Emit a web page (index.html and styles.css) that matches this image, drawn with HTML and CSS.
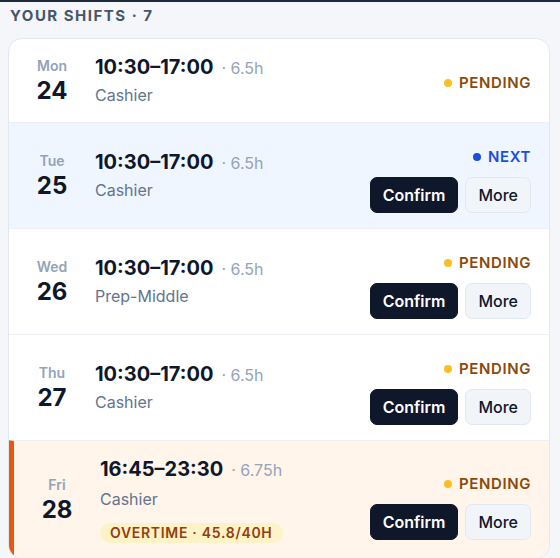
FILE: index.html
```html
<!DOCTYPE html>
<html lang="en">
  <head>
    <meta charset="UTF-8" />
    <meta name="viewport" content="width=device-width, initial-scale=1.0" />
    <title>Your Shifts</title>
    <link rel="stylesheet" href="styles.css">
  </head>
  <body>
    <div class="topline"></div>
    <main class="page">
      <h2 class="section-title">YOUR SHIFTS · 7</h2>

      <ul class="shift-list">
        <li class="shift">
          <div class="day"><span class="dow">Mon</span><span class="date">24</span></div>
          <div class="info">
            <div class="hours"><span class="time">10:30–17:00</span><span class="dur">· 6.5h</span></div>
            <div class="role">Cashier</div>
          </div>
          <div class="side solo">
            <span class="status pending">PENDING</span>
          </div>
        </li>

        <li class="shift next">
          <div class="day"><span class="dow">Tue</span><span class="date">25</span></div>
          <div class="info">
            <div class="hours"><span class="time">10:30–17:00</span><span class="dur">· 6.5h</span></div>
            <div class="role">Cashier</div>
          </div>
          <div class="side">
            <span class="status upcoming">NEXT</span>
            <div class="actions">
              <button class="btn btn-dark">Confirm</button>
              <button class="btn btn-light">More</button>
            </div>
          </div>
        </li>

        <li class="shift">
          <div class="day"><span class="dow">Wed</span><span class="date">26</span></div>
          <div class="info">
            <div class="hours"><span class="time">10:30–17:00</span><span class="dur">· 6.5h</span></div>
            <div class="role">Prep-Middle</div>
          </div>
          <div class="side">
            <span class="status pending">PENDING</span>
            <div class="actions">
              <button class="btn btn-dark">Confirm</button>
              <button class="btn btn-light">More</button>
            </div>
          </div>
        </li>

        <li class="shift">
          <div class="day"><span class="dow">Thu</span><span class="date">27</span></div>
          <div class="info">
            <div class="hours"><span class="time">10:30–17:00</span><span class="dur">· 6.5h</span></div>
            <div class="role">Cashier</div>
          </div>
          <div class="side">
            <span class="status pending">PENDING</span>
            <div class="actions">
              <button class="btn btn-dark">Confirm</button>
              <button class="btn btn-light">More</button>
            </div>
          </div>
        </li>

        <li class="shift overtime">
          <div class="day"><span class="dow">Fri</span><span class="date">28</span></div>
          <div class="info">
            <div class="hours"><span class="time">16:45–23:30</span><span class="dur">· 6.75h</span></div>
            <div class="role">Cashier</div>
            <span class="ot-badge">OVERTIME · 45.8/40H</span>
          </div>
          <div class="side">
            <span class="status pending">PENDING</span>
            <div class="actions">
              <button class="btn btn-dark">Confirm</button>
              <button class="btn btn-light">More</button>
            </div>
          </div>
        </li>
      </ul>
    </main>
  </body>
</html>
```

FILE: styles.css
```css
body {
  margin: 0;
  background: #f4f6fa;
  font-family: Inter, "Noto Sans", sans-serif;
  color: #0f172a;
}
.topline {
  height: 2px;
  background: #1e293b;
}
.page {
  padding: 0 10px 0 8px;
}
.section-title {
  margin: 4px 0 12px 2px;
  font-size: 15px;
  line-height: 20px;
  font-weight: 700;
  letter-spacing: 0.1em;
  color: #475569;
}
.shift-list {
  list-style: none;
  margin: 0;
  padding: 0;
  background: #fff;
  border: 1px solid #e2e8f0;
  border-radius: 14px;
  overflow: hidden;
}
.shift {
  display: flex;
  align-items: center;
  padding: 15px 18px 15px 20px;
  border-top: 1px solid #edf1f6;
}
.shift:first-child {
  border-top: none;
}
.shift.next {
  background: #eff6ff;
}
.shift.overtime {
  background: #fff5eb;
  border-left: 6px solid #ea580c;
  margin-left: -1px;
}
.day {
  width: 46px;
  display: flex;
  flex-direction: column;
  align-items: center;
}
.dow {
  font-size: 14px;
  line-height: 18px;
  font-weight: 600;
  color: #94a3b8;
  margin-bottom: 2px;
}
.date {
  font-size: 24px;
  line-height: 28px;
  font-weight: 700;
}
.info {
  flex: 1;
  margin-left: 20px;
}
.hours {
  display: flex;
  align-items: baseline;
  height: 26px;
  line-height: 26px;
}
.time {
  font-size: 20px;
  font-weight: 700;
}
.dur {
  margin-left: 8px;
  font-size: 16px;
  color: #94a3b8;
}
.role {
  margin-top: 3px;
  font-size: 16px;
  line-height: 24px;
  color: #64748b;
}
.overtime .role {
  margin-top: 5px;
}
.ot-badge {
  display: inline-block;
  margin-top: 12px;
  padding: 0 10px;
  height: 20px;
  line-height: 20px;
  border-radius: 10px;
  background: #fef3c7;
  color: #92400e;
  font-size: 14px;
  font-weight: 600;
  letter-spacing: 0.05em;
}
.side {
  display: flex;
  flex-direction: column;
  align-items: flex-end;
  padding-top: 9px;
}
.side.solo {
  padding-top: 5px;
}
.overtime .side {
  padding-top: 14px;
}
.status {
  display: flex;
  align-items: center;
  font-size: 15px;
  line-height: 20px;
  font-weight: 600;
  letter-spacing: 0.04em;
}
.status::before {
  content: "";
  width: 8px;
  height: 8px;
  border-radius: 50%;
  margin-right: 7px;
}
.status.pending {
  color: #8a4a0b;
}
.status.pending::before {
  background: #fbbf24;
}
.status.upcoming {
  color: #1d4ed8;
}
.status.upcoming::before {
  background: #1d4ed8;
}
.actions {
  display: flex;
  gap: 7px;
  margin-top: 10px;
}
.btn {
  height: 36px;
  padding: 0 12px;
  border-radius: 7px;
  font-family: inherit;
  font-size: 16px;
  cursor: pointer;
}
.btn-dark {
  background: #0f172a;
  border: 1px solid #0f172a;
  color: #fff;
  font-weight: 600;
}
.btn-light {
  background: #f1f5f9;
  border: 1px solid #e2e8f0;
  color: #0f172a;
  font-weight: 500;
}
```
